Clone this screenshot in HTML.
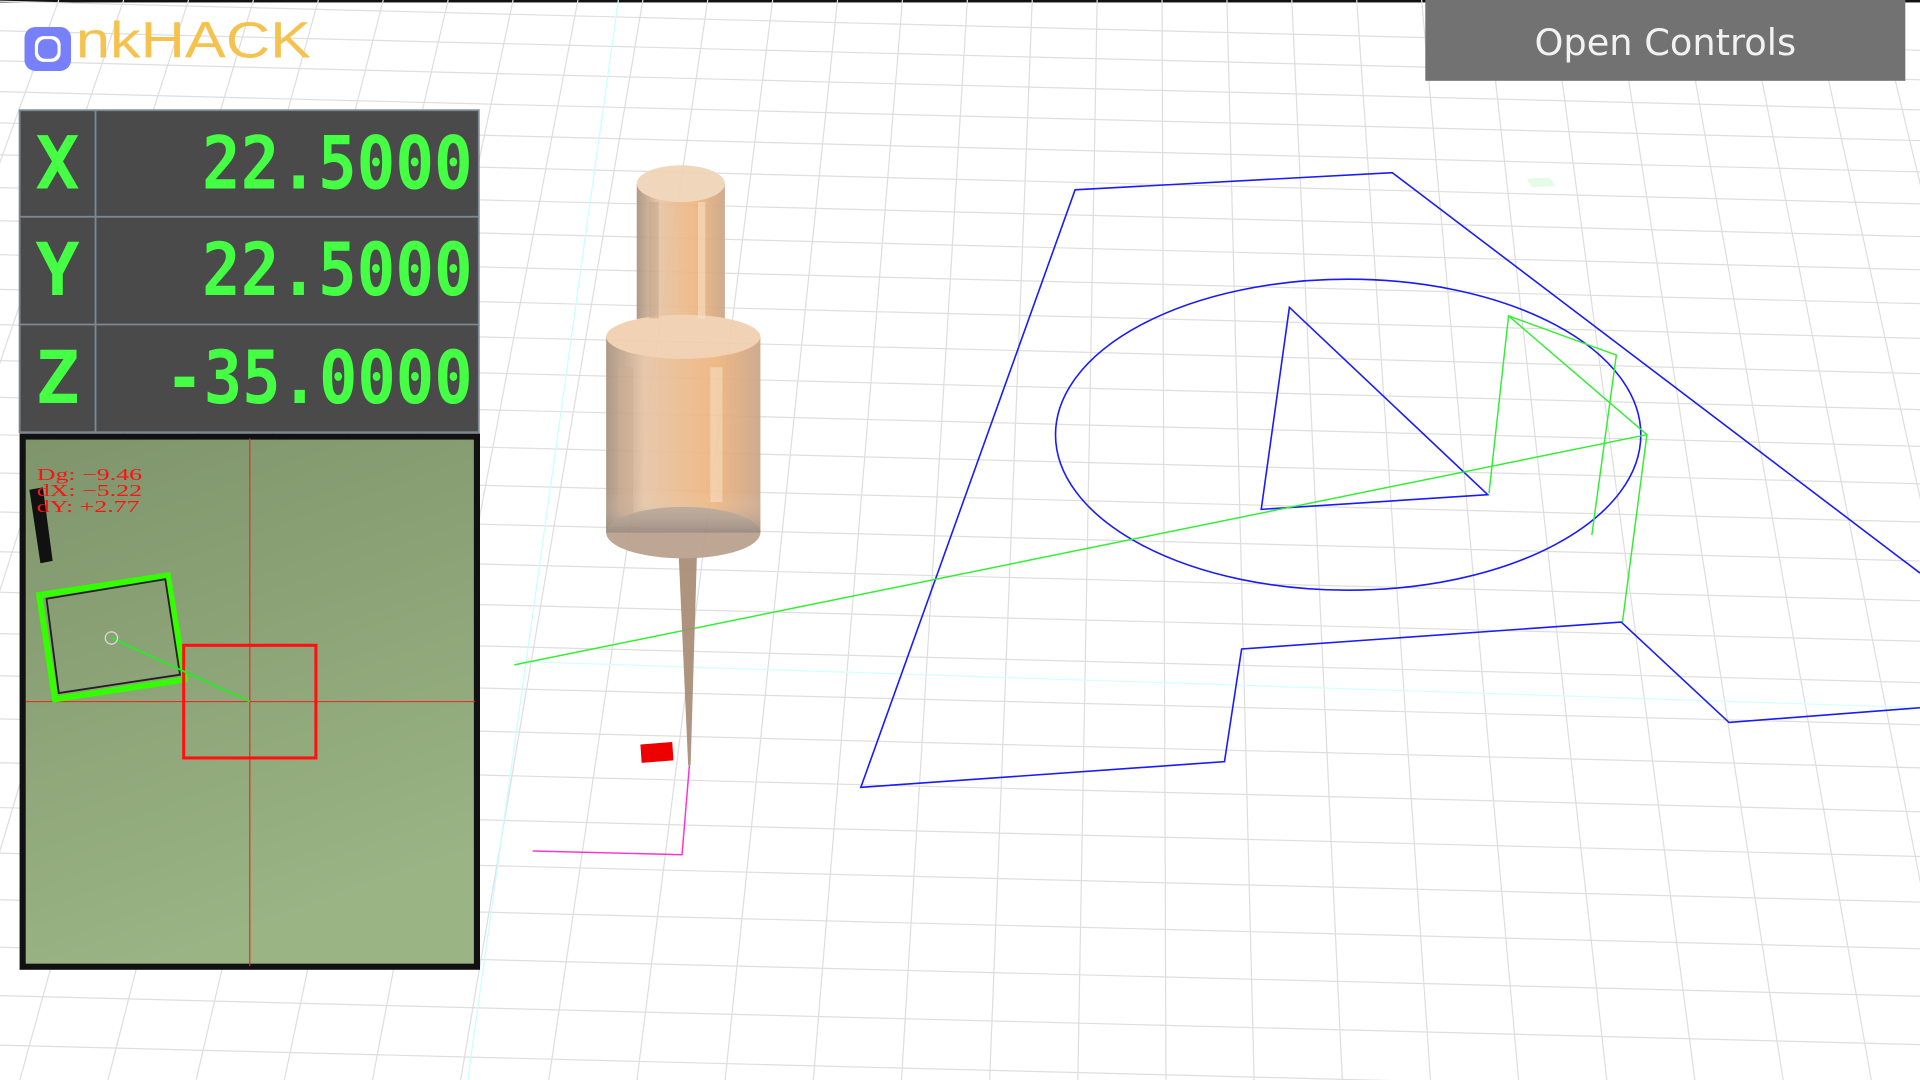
<!DOCTYPE html>
<html><head><meta charset="utf-8"><style>
html,body{margin:0;padding:0;background:#fff;overflow:hidden;width:1920px;height:1080px}
svg{display:block}
</style></head><body>
<svg width="1920" height="1080" viewBox="0 0 1568 882" xmlns="http://www.w3.org/2000/svg" preserveAspectRatio="none">
<defs>
<linearGradient id="cyl" x1="0" x2="1" y1="0" y2="0">
<stop offset="0" stop-color="#a8917e"/><stop offset="0.25" stop-color="#e6c4a4"/><stop offset="0.7" stop-color="#efb47c"/><stop offset="1" stop-color="#caa588"/>
</linearGradient>
<linearGradient id="cylv" x1="0" x2="0" y1="0" y2="1">
<stop offset="0" stop-color="#fff" stop-opacity="0"/><stop offset="0.8" stop-color="#fff" stop-opacity="0"/><stop offset="1" stop-color="#555" stop-opacity="0.35"/>
</linearGradient>
<linearGradient id="cam" x1="0" x2="0.3" y1="0" y2="1">
<stop offset="0" stop-color="#7f946b"/><stop offset="1" stop-color="#9ab484"/>
</linearGradient>
</defs>
<rect width="1568" height="882" fill="#fff"/>
<rect width="1568" height="2" fill="#111"/>
<g stroke="#dedede" stroke-width="1" fill="none" id="grid"></g>
<line x1="505" y1="0" x2="382" y2="882" stroke="#c8ffff" stroke-width="1"/>
<line x1="420" y1="540" x2="1568" y2="578" stroke="#d4ffff" stroke-width="1"/>
<g stroke="#1a1aff" stroke-width="1.3" fill="none">
<polyline points="1568,468 1137,141 878,155 703,643 1000,622 1014,530 1324,508 1412,590 1568,578"/>
<ellipse cx="1101" cy="355" rx="239" ry="127"/>
<polygon points="1053,251 1030,416 1215,404"/>
</g>
<g stroke="#33ee33" stroke-width="1.2" fill="none">
<line x1="420" y1="543" x2="1345" y2="355"/>
<polyline points="1216,403 1232,258 1320,290 1300,437"/>
<polyline points="1232,258 1345,355 1325,508"/>
</g>
<polygon points="1247,146 1266,145 1270,152 1251,153" fill="#e6fbe6"/>
<polyline points="563,625 557,698 435,695" stroke="#ff33cc" stroke-width="1.2" fill="none"/>
<polygon points="523,608 549,606 550,621 524,623" fill="#ee0000"/>
<g opacity="0.92">
<polygon points="553,425 570,425 564,625 562,625" fill="#a88c74"/>
<rect x="520" y="150" width="72" height="120" fill="url(#cyl)"/>
<ellipse cx="556" cy="150" rx="36" ry="15" fill="#efd3b6"/>
<rect x="495" y="275" width="126" height="160" fill="url(#cyl)"/>
<ellipse cx="558" cy="435" rx="63" ry="21" fill="#b8a08c"/>
<rect x="495" y="275" width="126" height="160" fill="url(#cylv)"/>
<ellipse cx="558" cy="275" rx="63" ry="18" fill="#f0cfae"/>
<rect x="505" y="300" width="12" height="120" fill="#c8a88c" opacity="0.6"/>
<rect x="580" y="300" width="10" height="110" fill="#f5dcc0" opacity="0.6"/>
<rect x="530" y="165" width="8" height="95" fill="#c29e80" opacity="0.5"/>
<rect x="570" y="165" width="6" height="95" fill="#f6e0c8" opacity="0.6"/>
</g>
<g>
<rect x="16" y="90" width="375" height="263" fill="#4a4a4a"/>
<g stroke="#7d8894" stroke-width="1.5" fill="none">
<rect x="16" y="90" width="375" height="263"/>
<line x1="78" y1="90" x2="78" y2="353"/>
<line x1="16" y1="177" x2="391" y2="177"/>
<line x1="16" y1="265" x2="391" y2="265"/>
</g>
<g font-family="'DejaVu Sans Mono','Liberation Mono',monospace" font-weight="bold" font-size="60" fill="#44ff44">
<text x="47" y="154" text-anchor="middle">X</text>
<text x="47" y="241" text-anchor="middle">Y</text>
<text x="47" y="329" text-anchor="middle">Z</text>
<text x="165" y="154" textLength="221" lengthAdjust="spacingAndGlyphs">22.5000</text>
<text x="165" y="241" textLength="221" lengthAdjust="spacingAndGlyphs">22.5000</text>
<text x="135" y="329" textLength="251" lengthAdjust="spacingAndGlyphs">-35.0000</text>
</g>
</g>
<rect x="18.5" y="356.5" width="371" height="433" fill="url(#cam)" stroke="#111" stroke-width="5"/>
<line x1="204" y1="358" x2="204" y2="789" stroke="#dd3322" stroke-width="1"/>
<line x1="21" y1="573" x2="388" y2="573" stroke="#ee2222" stroke-width="0.8"/>
<polygon points="24,400 35,398 43,458 33,460" fill="#111"/>
<polygon points="32,486 137,470 151,555 45,571" fill="none" stroke="#33ff00" stroke-width="5"/>
<polygon points="38,489 135,473 147,551 48,566" fill="none" stroke="#222" stroke-width="1.5"/>
<rect x="150" y="527" width="108" height="92" fill="none" stroke="#ff1111" stroke-width="2.5"/>
<line x1="91" y1="521" x2="204" y2="573" stroke="#22ee22" stroke-width="1.5"/>
<circle cx="91" cy="521" r="5" fill="none" stroke="#ddd" stroke-width="1"/>
<g font-family="'Liberation Serif',serif" font-size="14" fill="#ff1111">
<text x="30" y="392" textLength="86" lengthAdjust="spacingAndGlyphs">Dg:  −9.46</text>
<text x="30" y="405" textLength="86" lengthAdjust="spacingAndGlyphs">dX:  −5.22</text>
<text x="30" y="418" textLength="84" lengthAdjust="spacingAndGlyphs">dY:  +2.77</text>
</g>
<rect x="20" y="22" width="38" height="36" rx="9" fill="#7780f8"/>
<rect x="28.5" y="29.5" width="21" height="21" rx="7" fill="#fff"/>
<rect x="31" y="32" width="16" height="16" rx="6" fill="#7780f8"/>
<text x="62" y="47" font-family="'Liberation Sans',sans-serif" font-size="42" fill="#f5c24d" textLength="192" lengthAdjust="spacingAndGlyphs">nkHACK</text>
<rect x="1164" y="0" width="392" height="66" fill="#727272"/>
<text x="1360" y="45" text-anchor="middle" font-family="'DejaVu Sans','Liberation Sans',sans-serif" font-size="30" fill="#f2f2f2">Open Controls</text>
</svg>
<script>
(function(){
var g=document.getElementById('grid');var s='';
for(var x0=-800;x0<=2400;x0+=53){var x1=940+(x0-940)*(1+882/2460);s+='<line x1="'+x0+'" y1="0" x2="'+x1.toFixed(1)+'" y2="882"/>';}
var y=6;while(y<900){s+='<line x1="0" y1="'+(y-5).toFixed(1)+'" x2="1568" y2="'+(y+35).toFixed(1)+'"/>';y+=24+y*0.02;}
g.innerHTML=s;
})();
</script>
</body></html>
